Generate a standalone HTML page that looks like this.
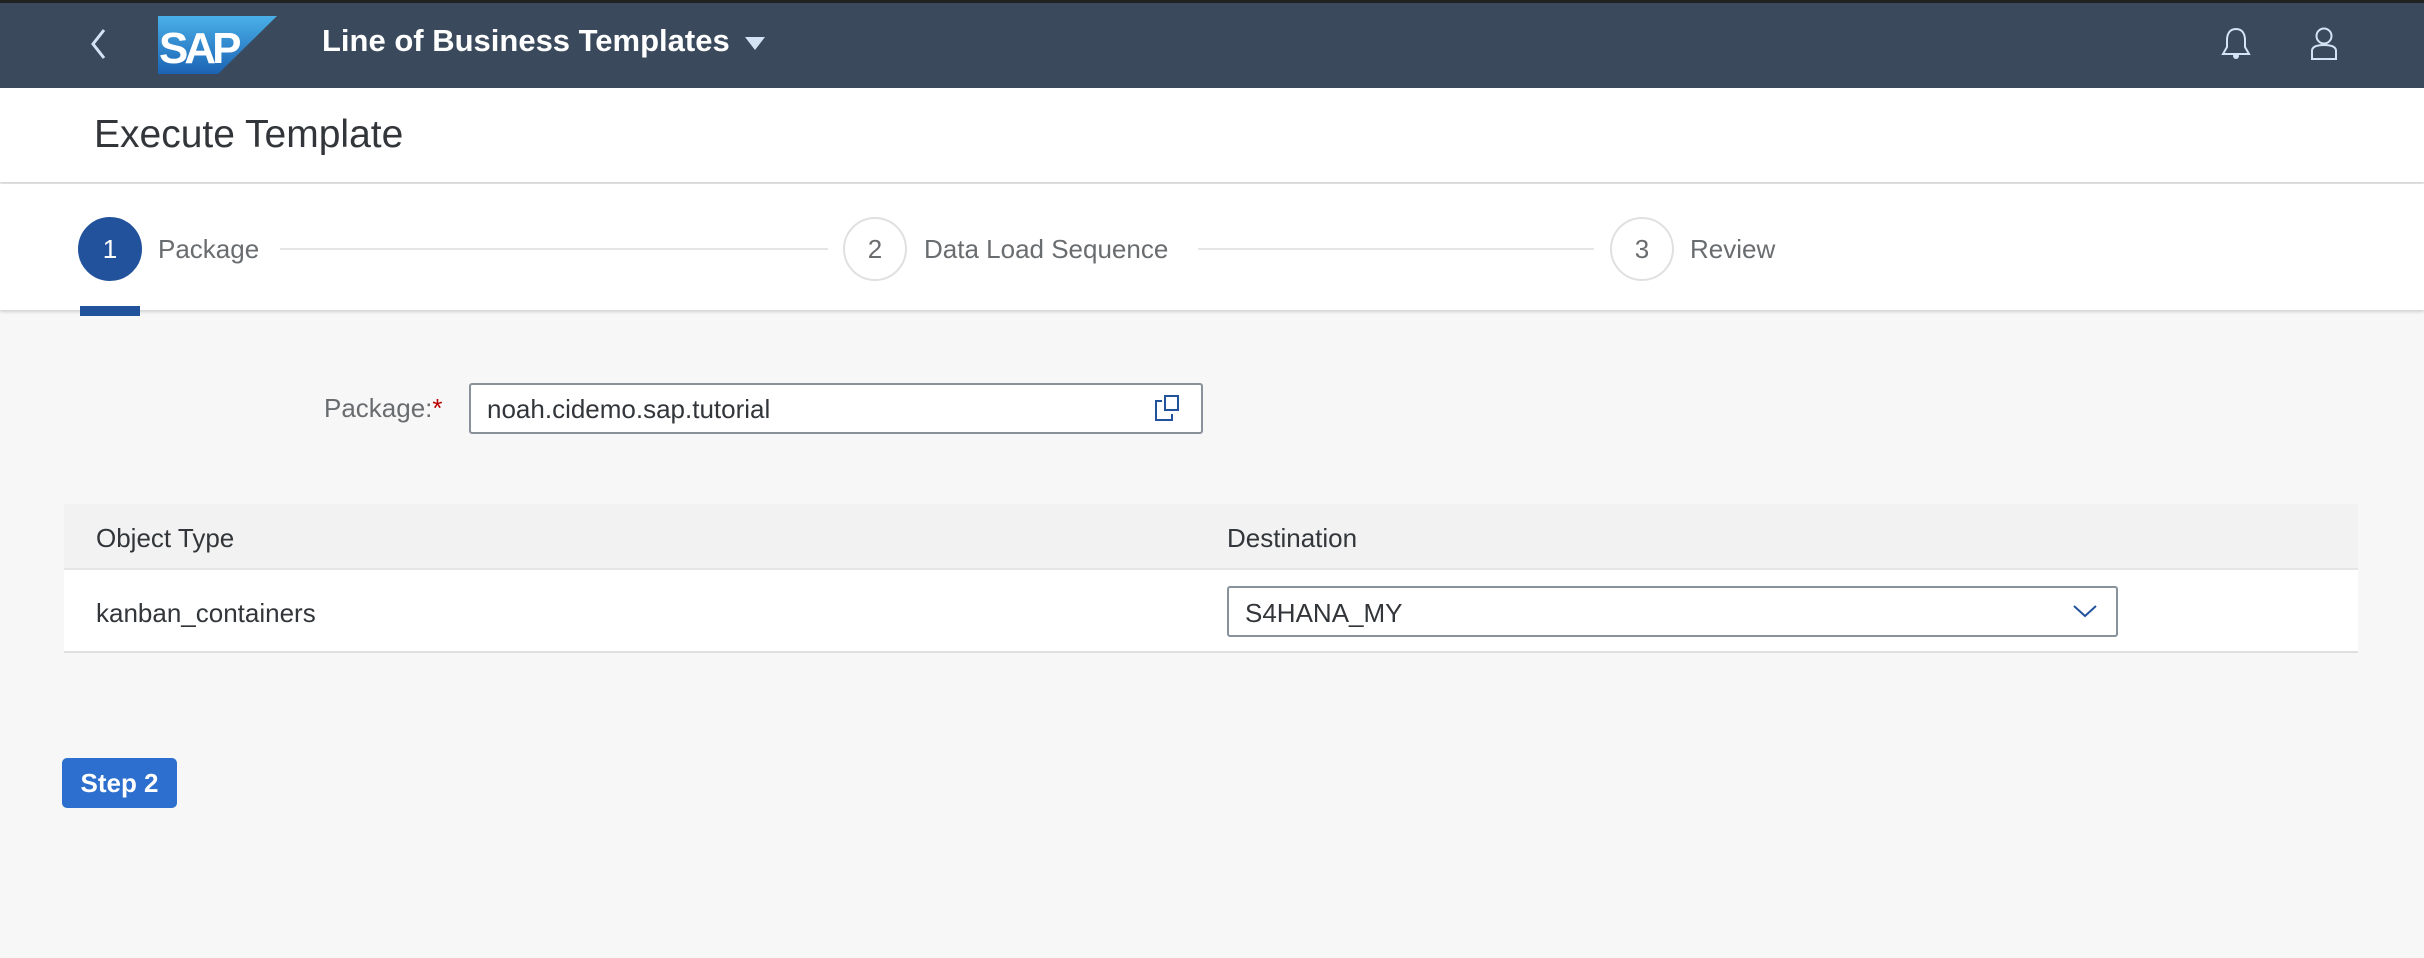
<!DOCTYPE html>
<html><head><meta charset="utf-8"><style>
*{box-sizing:border-box;margin:0;padding:0}
body{width:2424px;height:958px;background:#f7f7f7;font-family:"Liberation Sans",sans-serif;position:relative;overflow:hidden;color:#32363a}
.a{position:absolute}
.hdr{left:0;top:0;width:2424px;height:88px;background:#3a4a5c;border-top:3px solid #222}
.ttl{left:0;top:88px;width:2424px;height:94px;background:#fff;box-shadow:0 2px 3px rgba(0,0,0,.15)}
.wiz{left:0;top:184px;width:2424px;height:126px;background:#fff;box-shadow:0 2px 3px rgba(0,0,0,.15)}
.circ{width:64px;height:64px;border-radius:50%;border:2px solid #e0e0e0;background:#fff;color:#6a6d70;font-size:26px;display:flex;align-items:center;justify-content:center}
.st{font-size:26px;color:#6a6d70}
.ln{height:2px;background:#e5e5e5}
</style></head><body>
<div class="a hdr"></div>
<svg class="a" style="left:86px;top:27px" width="24" height="34" viewBox="0 0 24 34"><path d="M18 3 L7 17 L18 31" stroke="#d4e4f5" stroke-width="3" fill="none"/></svg>
<svg class="a" style="left:158px;top:16px" width="120" height="58" viewBox="0 0 120 58"><defs><linearGradient id="g" x1="0" y1="0" x2="0" y2="1"><stop offset="0" stop-color="#4ab0e8"/><stop offset="1" stop-color="#1b63b4"/></linearGradient></defs><polygon points="0,0 119,0 60,58 0,58" fill="url(#g)"/><text x="1" y="47" font-family="Liberation Sans" font-weight="bold" font-size="44" fill="#fff" letter-spacing="-4">SAP</text></svg>
<div class="a" style="left:322px;top:23px;font-size:31px;font-weight:bold;color:#fff">Line of Business Templates</div>
<svg class="a" style="left:745px;top:37px" width="20" height="14"><polygon points="0,0 20,0 10,13" fill="#d4e4f5"/></svg>
<svg class="a" style="left:2220px;top:26px" width="32" height="36" viewBox="0 0 32 36"><path d="M16 3 C9 3 7 9 7 14 L7 21 L3 28 L29 28 L25 21 L25 14 C25 9 23 3 16 3Z" stroke="#d4e4f5" stroke-width="2" fill="none"/><circle cx="16" cy="30" r="3" fill="#d4e4f5"/></svg>
<svg class="a" style="left:2309px;top:26px" width="30" height="36" viewBox="0 0 30 36"><circle cx="15" cy="10" r="7.5" stroke="#d4e4f5" stroke-width="2" fill="none"/><path d="M3 33 L3 25 C3 21 7 19 15 19 C23 19 27 21 27 25 L27 33Z" stroke="#d4e4f5" stroke-width="2" fill="none"/></svg>
<div class="a ttl"></div>
<div class="a" style="left:94px;top:113px;font-size:39px;color:#32363a">Execute Template</div>
<div class="a wiz"></div>
<div class="a circ" style="left:78px;top:217px;background:#23529c;border-color:#23529c;color:#fff">1</div>
<div class="a st" style="left:158px;top:234px;">Package</div>
<div class="a ln" style="left:280px;top:248px;width:548px"></div>
<div class="a circ" style="left:843px;top:217px">2</div>
<div class="a st" style="left:924px;top:234px;">Data Load Sequence</div>
<div class="a ln" style="left:1198px;top:248px;width:396px"></div>
<div class="a circ" style="left:1610px;top:217px">3</div>
<div class="a st" style="left:1690px;top:234px;">Review</div>
<div class="a" style="left:80px;top:306px;width:60px;height:10px;background:#23529c"></div>
<div class="a" style="left:324px;top:393px;font-size:26px;color:#6a6d70">Package:<span style="color:#bb0000">*</span></div>
<div class="a" style="left:469px;top:383px;width:734px;height:51px;background:#fff;border:2px solid #89919a;border-radius:3px"></div>
<div class="a" style="left:487px;top:394px;font-size:26px;color:#32363a">noah.cidemo.sap.tutorial</div>
<svg class="a" style="left:1152px;top:394px" width="32" height="30" viewBox="0 0 32 30"><rect x="13" y="2" width="13" height="14" stroke="#23529c" stroke-width="2" fill="none"/><path d="M10 7 L4 7 L4 26 L20 26 L20 20" stroke="#23529c" stroke-width="2" fill="none"/></svg>
<div class="a" style="left:64px;top:504px;width:2294px;height:66px;background:#f2f2f2;border-bottom:2px solid #e5e5e5"></div>
<div class="a" style="left:96px;top:523px;font-size:26px">Object Type</div>
<div class="a" style="left:1227px;top:523px;font-size:26px">Destination</div>
<div class="a" style="left:64px;top:570px;width:2294px;height:83px;background:#fff;border-bottom:2px solid #e0e0e0"></div>
<div class="a" style="left:96px;top:598px;font-size:26px">kanban_containers</div>
<div class="a" style="left:1227px;top:586px;width:891px;height:51px;background:#fff;border:2px solid #89919a;border-radius:3px"></div>
<div class="a" style="left:1245px;top:598px;font-size:26px">S4HANA_MY</div>
<svg class="a" style="left:2072px;top:603px" width="26" height="16"><path d="M2 3 L13 13 L24 3" stroke="#23529c" stroke-width="2" fill="none"/></svg>
<div class="a" style="left:62px;top:758px;width:115px;height:50px;background:#2d6fce;border-radius:5px;color:#fff;font-weight:bold;font-size:26px;display:flex;align-items:center;justify-content:center">Step 2</div>
</body></html>
